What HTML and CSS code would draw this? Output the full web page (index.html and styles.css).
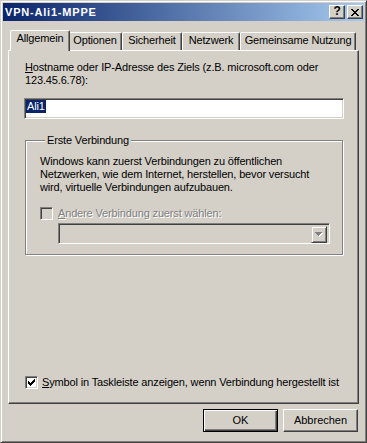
FILE: index.html
```html
<!DOCTYPE html>
<html lang="de">
<head>
  <meta charset="UTF-8" />
  <title>VPN-Ali1-MPPE</title>
  <link rel="stylesheet" href="styles.css">
</head>
<body>
  <div class="window">
    <div class="titlebar">
      <span class="title">VPN-Ali1-MPPE</span>
      <div class="caption-buttons">
        <span class="cap-btn help">?</span>
        <span class="cap-btn close">
          <svg width="8" height="7" viewBox="0 0 8 7" shape-rendering="crispEdges"><path fill="#000" d="M0 0h2v1H0zM6 0h2v1H6zM1 1h2v1H1zM5 1h2v1H5zM2 2h4v1H2zM3 3h2v1H3zM2 4h4v1H2zM1 5h2v1H1zM5 5h2v1H5zM0 6h2v1H0zM6 6h2v1H6z"/></svg>
        </span>
      </div>
    </div>

    <div class="client">
      <div class="tabs">
        <div class="tab active t-general">Allgemein</div>
        <div class="tab t-options">Optionen</div>
        <div class="tab t-security">Sicherheit</div>
        <div class="tab t-network">Netzwerk</div>
        <div class="tab t-sharing">Gemeinsame Nutzung</div>
      </div>

      <div class="panel">
        <label class="field-label"><u>H</u>ostname oder IP-Adresse des Ziels (z.B. microsoft.com oder<br>123.45.6.78):</label>
        <div class="textbox"><span class="selected">Ali1</span></div>

        <fieldset class="group">
          <legend>Erste Verbindung</legend>
          <p class="group-text">Windows kann zuerst Verbindungen zu öffentlichen<br>Netzwerken, wie dem Internet, herstellen, bevor versucht<br>wird, virtuelle Verbindungen aufzubauen.</p>
          <div class="check-row disabled">
            <span class="checkbox"></span>
            <span class="check-label"><u>A</u>ndere Verbindung zuerst wählen:</span>
          </div>
          <div class="combo">
            <span class="combo-btn">
              <svg width="8" height="5" viewBox="0 0 8 5" shape-rendering="crispEdges">
                <path fill="#fff" d="M1 1h7v1H1zM2 2h5v1H2zM3 3h3v1H3zM4 4h1v1H4z"/>
                <path fill="#808080" d="M0 0h7v1H0zM1 1h5v1H1zM2 2h3v1H2zM3 3h1v1H3z"/>
              </svg>
            </span>
          </div>
        </fieldset>

        <div class="check-row taskbar">
          <span class="checkbox checked">
            <svg width="7" height="7" viewBox="0 0 7 7" shape-rendering="crispEdges"><path fill="#000" d="M6 0h1v1H6zM5 1h2v1H5zM0 2h1v1H0zM4 2h3v1H4zM0 3h2v1H0zM3 3h3v1H3zM0 4h5v1H0zM1 5h3v1H1zM2 6h1v1H2z"/></svg>
          </span>
          <span class="check-label"><u>S</u>ymbol in Taskleiste anzeigen, wenn Verbindung hergestellt ist</span>
        </div>
      </div>

      <div class="buttons">
        <button class="btn default">OK</button>
        <button class="btn">Abbrechen</button>
      </div>
    </div>
  </div>
</body>
</html>
```

FILE: styles.css
```css
* {
  box-sizing: border-box;
}
body {
  margin: 0;
  background-color: #d4d0c8;
  color: #000;
  font-family: "Liberation Sans", Arial, sans-serif;
  font-size: 11px;
  letter-spacing: -0.15px;
  line-height: 13px;
}

/* window frame */
.window {
  width: 367px;
  height: 443px;
  border: 1px solid;
  border-color: #d4d0c8 #404040 #404040 #d4d0c8;
  box-shadow: inset 1px 1px #fff, inset -1px -1px #808080;
  padding: 2px;
  display: flex;
  flex-direction: column;
}
.titlebar {
  flex: none;
  height: 18px;
  padding: 0 1px 0 2px;
  display: flex;
  align-items: center;
  background: linear-gradient(to right, #0a246a, #a6caf0);
}
.title {
  flex: 1;
  color: #fff;
  font-weight: bold;
  letter-spacing: 0.8px;
}
.caption-buttons {
  display: flex;
  gap: 2px;
}
.cap-btn {
  width: 16px;
  height: 14px;
  background-color: #d4d0c8;
  border: 1px solid;
  border-color: #fff #404040 #404040 #fff;
  box-shadow: inset -1px -1px #808080;
  display: flex;
  align-items: center;
  justify-content: center;
}
.cap-btn.help {
  font-weight: bold;
  font-size: 12px;
  padding-bottom: 1px;
}
.cap-btn.close svg {
  margin-left: -1px;
}

/* dialog body */
.client {
  flex: 1;
  padding: 9px 5px 8px 5px;
  display: flex;
  flex-direction: column;
}
.tabs {
  flex: none;
  height: 20px;
  padding-left: 4px;
  display: flex;
  align-items: flex-end;
}
.tab {
  height: 18px;
  padding-top: 1px;
  border: 1px solid;
  border-bottom: none;
  border-color: #fff #404040 transparent #fff;
  border-radius: 2px 2px 0 0;
  box-shadow: inset -1px 0 #808080;
  background-color: #d4d0c8;
  display: flex;
  justify-content: center;
  white-space: nowrap;
}
.tab.active {
  position: relative;
  z-index: 2;
  height: 21px;
  margin: 0 -2px -1px -2px;
}
.t-general { width: 60px; }
.t-options { width: 54px; }
.t-security { width: 60px; }
.t-network { width: 58px; }
.t-sharing { width: 116px; }

.panel {
  flex: none;
  height: 354px;
  border: 1px solid;
  border-color: #fff #404040 #404040 #fff;
  box-shadow: inset -1px -1px #808080;
  padding: 10px 14px 14px 16px;
  display: flex;
  flex-direction: column;
}
.field-label {
  display: block;
  white-space: nowrap;
}
.textbox {
  margin: 11px 0 0 -1px;
  width: 320px;
  height: 21px;
  background-color: #fff;
  border: 1px solid;
  border-color: #808080 #fff #fff #808080;
  box-shadow: inset 1px 1px #404040, inset -1px -1px #d4d0c8;
  padding: 1px 0 0 1px;
  display: flex;
  align-items: flex-start;
}
.selected {
  background-color: #0a246a;
  color: #fff;
  padding: 0 1px;
}

/* group box */
.group {
  margin: 15px 0 0 0;
  width: 318px;
  padding: 8px 0 10px 14px;
  border: 1px solid #808080;
  box-shadow: inset 1px 1px #fff, 1px 1px #fff;
}
.group legend {
  margin-left: 5px;
  padding: 0 2px;
  background-color: #d4d0c8;
}
.group-text {
  margin: 0;
  white-space: nowrap;
}

.check-row {
  display: flex;
  align-items: center;
  gap: 5px;
  white-space: nowrap;
}
.group .check-row {
  margin-top: 13px;
}
.check-row.taskbar {
  margin-top: auto;
  gap: 4px;
}
.checkbox {
  width: 13px;
  height: 13px;
  flex: none;
  background-color: #fff;
  border: 1px solid;
  border-color: #808080 #fff #fff #808080;
  box-shadow: inset 1px 1px #404040, inset -1px -1px #d4d0c8;
  padding: 2px 0 0 2px;
}
.disabled .checkbox {
  background-color: #d4d0c8;
}
.disabled .check-label {
  color: #808080;
  text-shadow: 1px 1px #fff;
}
.checkbox svg {
  display: block;
}

.combo {
  margin: 3px 0 0 18px;
  width: 272px;
  height: 21px;
  border: 1px solid;
  border-color: #808080 #fff #fff #808080;
  box-shadow: inset 1px 1px #404040, inset -1px -1px #d4d0c8;
  padding: 1px;
  display: flex;
  justify-content: flex-end;
}
.combo-btn {
  width: 16px;
  height: 17px;
  margin: 1px 1px 0 0;
  border: 1px solid;
  border-color: #d4d0c8 #404040 #404040 #d4d0c8;
  box-shadow: inset 1px 1px #fff, inset -1px -1px #808080;
  display: flex;
  align-items: center;
  justify-content: center;
}

/* dialog buttons */
.buttons {
  flex: none;
  margin-top: 5px;
  padding-right: 1px;
  display: flex;
  justify-content: flex-end;
  gap: 5px;
}
.btn {
  width: 75px;
  height: 23px;
  padding: 0;
  font: inherit;
  color: #000;
  background-color: #d4d0c8;
  border: 1px solid;
  border-color: #fff #404040 #404040 #fff;
  box-shadow: inset -1px -1px #808080;
}
.btn.default {
  border-color: #000;
  box-shadow: inset 1px 1px #fff, inset -1px -1px #404040, inset -2px -2px #808080;
}
```
